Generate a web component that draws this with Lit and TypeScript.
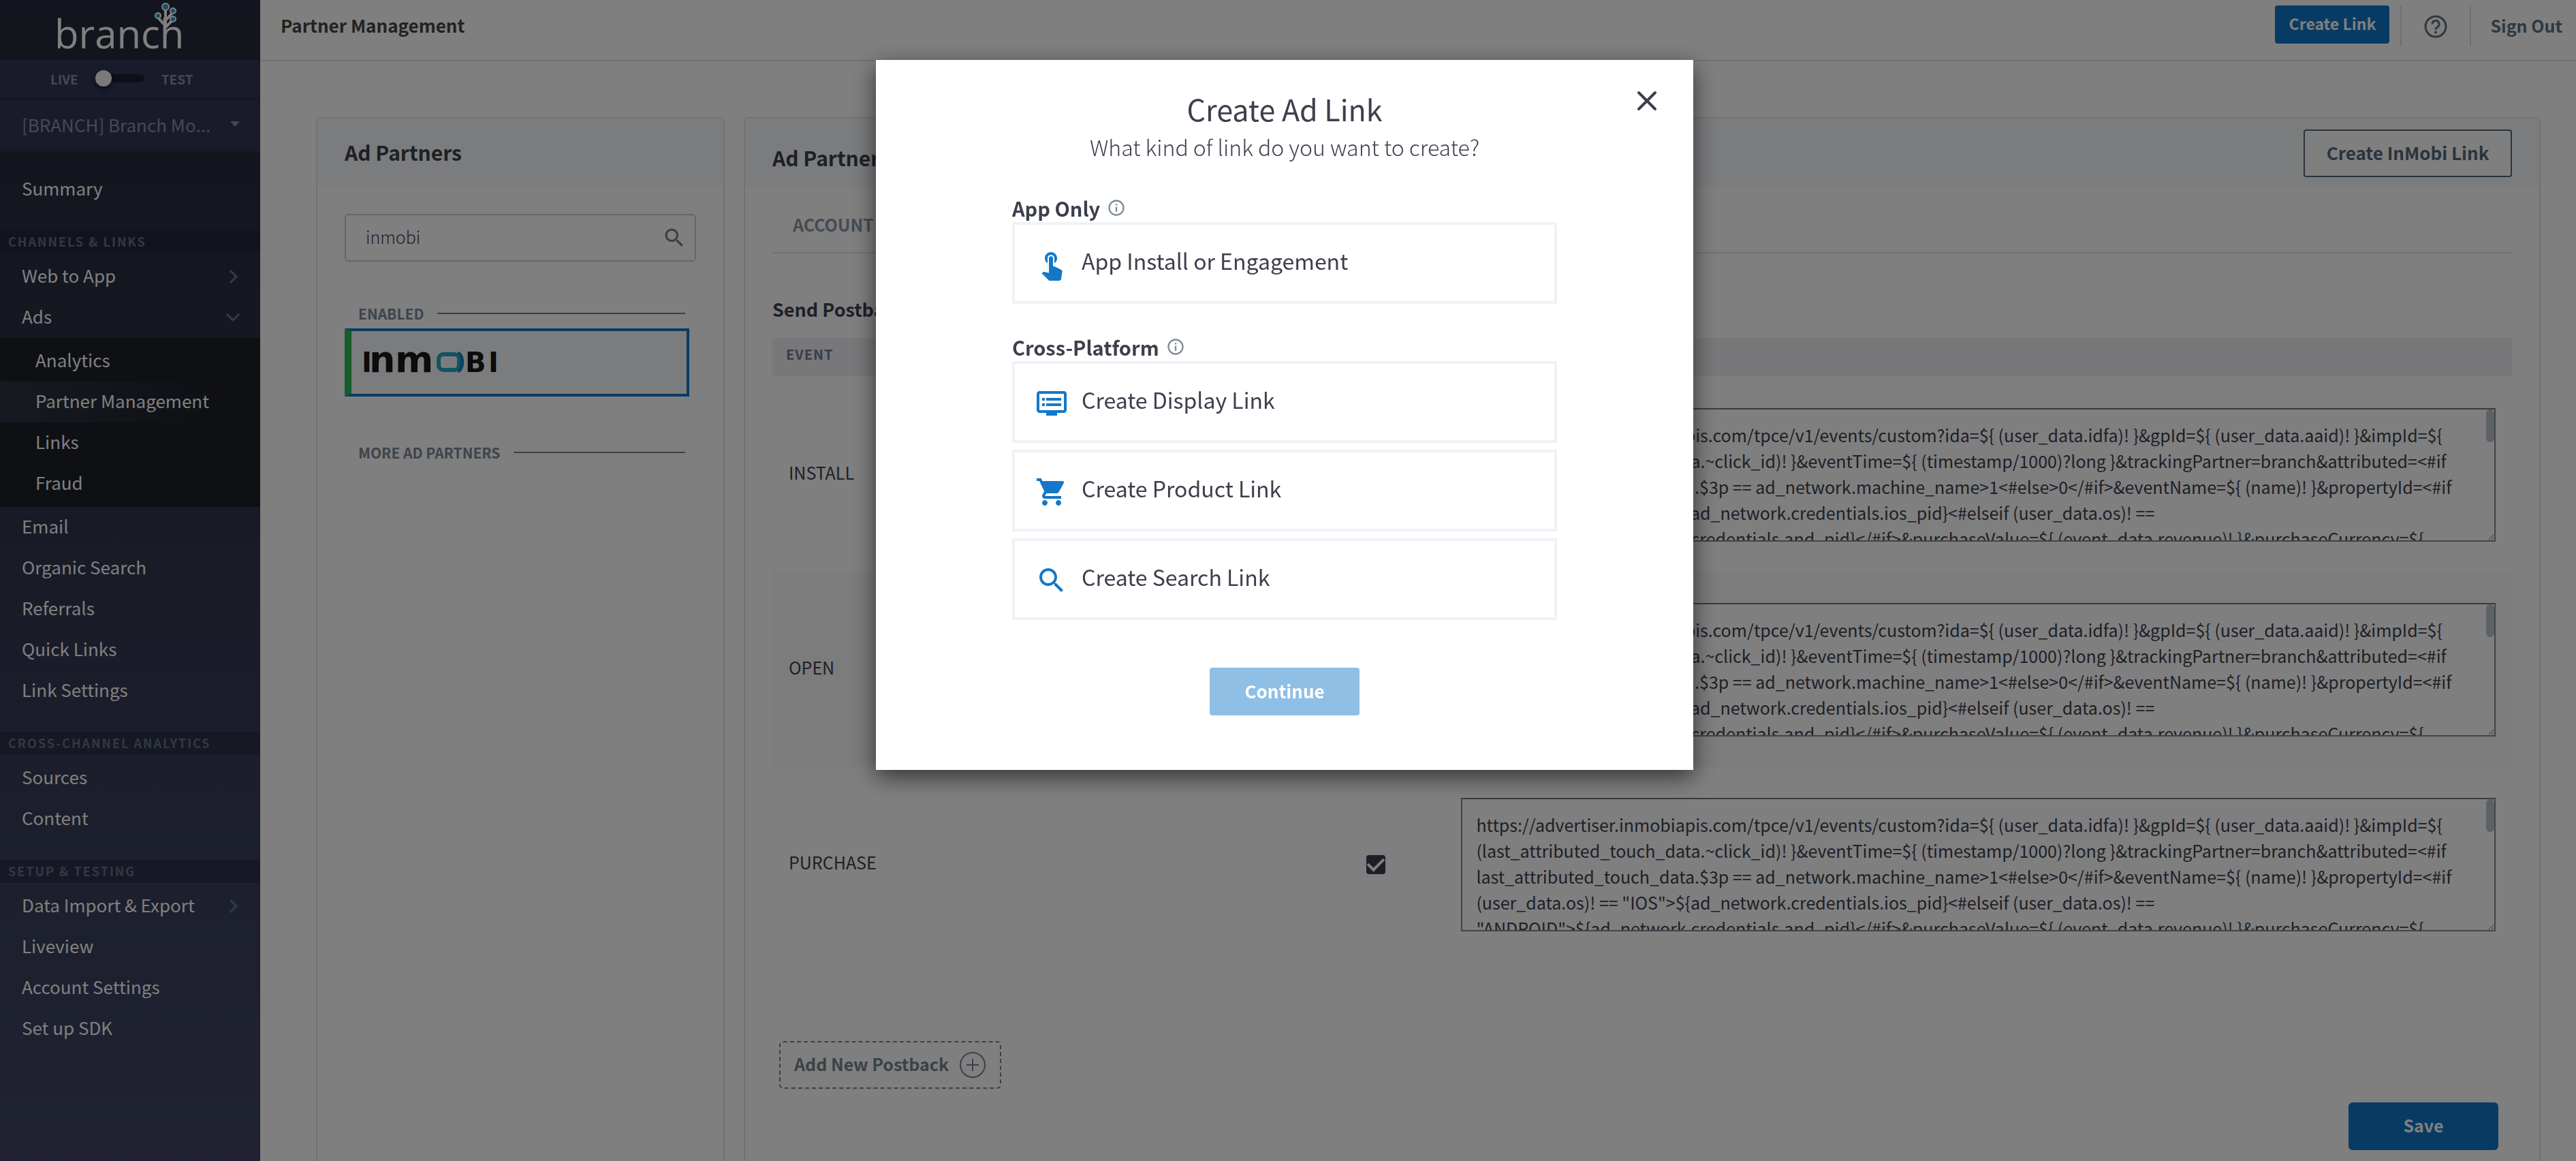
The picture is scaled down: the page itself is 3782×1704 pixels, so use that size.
import { LitElement, html, css, svg, nothing } from "lit";
import { customElement, property } from "lit/decorators.js";

const ICONS: Record<string, string> = {
  touch:
    "M9 11.24V7.5C9 6.12 10.12 5 11.5 5S14 6.12 14 7.5v3.74c1.21-.81 2-2.18 2-3.74C16 5.01 13.99 3 11.5 3S7 5.01 7 7.5c0 1.56.79 2.93 2 3.74zm9.84 4.63l-4.54-2.26c-.17-.07-.35-.11-.54-.11H13v-6c0-.83-.67-1.5-1.5-1.5S10 6.67 10 7.5v10.74l-3.43-.72c-.08-.01-.15-.03-.24-.03-.31 0-.59.13-.79.33l-.79.8 4.94 4.94c.27.27.65.44 1.06.44h6.79c.75 0 1.33-.55 1.44-1.28l.75-5.27c.01-.07.02-.14.02-.2 0-.62-.38-1.16-.91-1.38z",
  display:
    "M21 3H3c-1.1 0-2 .9-2 2v12c0 1.1.9 2 2 2h5v2h8v-2h5c1.1 0 1.99-.9 1.99-2L23 5c0-1.1-.9-2-2-2zm0 14H3V5h18v12zm-2-9H8v2h11V8zm0 4H8v2h11v-2zM7 8H5v2h2V8zm0 4H5v2h2v-2z",
  cart:
    "M7 18c-1.1 0-1.99.9-1.99 2S5.9 22 7 22s2-.9 2-2-.9-2-2-2zM1 2v2h2l3.6 7.59-1.35 2.45c-.16.28-.25.61-.25.96 0 1.1.9 2 2 2h12v-2H7.42c-.14 0-.25-.11-.25-.25l.03-.12.9-1.63h7.45c.75 0 1.41-.41 1.75-1.03l3.58-6.49c.08-.14.12-.31.12-.48 0-.55-.45-1-1-1H5.21l-.94-2H1zm16 16c-1.1 0-1.99.9-1.99 2s.89 2 1.99 2 2-.9 2-2-.9-2-2-2z",
  search:
    "M15.5 14h-.79l-.28-.27C15.41 12.59 16 11.11 16 9.5 16 5.91 13.09 3 9.5 3S3 5.91 3 9.5 5.91 16 9.5 16c1.61 0 3.09-.59 4.23-1.57l.27.28v.79l5 4.99L20.49 19l-4.99-5zm-6 0C7.01 14 5 11.99 5 9.5S7.01 5 9.5 5 14 7.01 14 9.5 11.99 14 9.5 14z",
  info:
    "M11 17h2v-6h-2v6zm1-15C6.48 2 2 6.48 2 12s4.48 10 10 10 10-4.48 10-10S17.52 2 12 2zm0 18c-4.41 0-8-3.59-8-8s3.59-8 8-8 8 3.59 8 8-3.59 8-8 8zM11 9h2V7h-2v2z",
};

const icon = (name: string, cls: string) =>
  html`<svg class=${cls} viewBox="0 0 24 24" aria-hidden="true">${svg`<path d=${ICONS[name]} fill="currentColor"></path>`}</svg>`;

const base = css`
  * { box-sizing: border-box; }
  button, input, select, textarea { font: inherit; color: inherit; margin: 0; }
  button { cursor: pointer; white-space: nowrap; padding: 0 0 4px; }
  a { color: inherit; text-decoration: none; }
`;

interface NavItem { label: string; arrow?: "right" | "down"; children?: string[]; }
interface NavGroup { title?: string; items: NavItem[]; }

const NAV: NavGroup[] = [
  { items: [{ label: "Summary" }] },
  {
    title: "CHANNELS & LINKS",
    items: [
      { label: "Web to App", arrow: "right" },
      { label: "Ads", arrow: "down", children: ["Analytics", "Partner Management", "Links", "Fraud"] },
      { label: "Email" },
      { label: "Organic Search" },
      { label: "Referrals" },
      { label: "Quick Links" },
      { label: "Link Settings" },
    ],
  },
  { title: "CROSS-CHANNEL ANALYTICS", items: [{ label: "Sources" }, { label: "Content" }] },
  {
    title: "SETUP & TESTING",
    items: [
      { label: "Data Import & Export", arrow: "right" },
      { label: "Liveview" },
      { label: "Account Settings" },
      { label: "Set up SDK" },
    ],
  },
];

@customElement("side-nav")
export class SideNav extends LitElement {
  static styles = [
    base,
    css`
      :host {
        display: block;
        background: linear-gradient(#26293a, #2c2f44 30%, #363b54 60%, #404564);
        color: #fff;
        font-size: 26px;
        font-weight: 400;
        overflow: hidden;
      }
      .logo { display: flex; justify-content: center; height: 88px; padding-right: 30px; }
      .logo svg { overflow: visible; }
      .mode {
        display: flex; align-items: center; gap: 25px; height: 58px; padding: 0 0 2px 74px;
        background: #323757; border-bottom: 2px solid #26293c;
        color: #8492a6; font-size: 19px; font-weight: 700;
      }
      .switch {
        appearance: none; width: 72px; height: 24px; border-radius: 12px; background: transparent;
        display: flex; align-items: center; position: relative;
      }
      .switch::before { content: ""; width: 66px; height: 12px; margin-left: 6px; border-radius: 6px; background: #1c1e30; }
      .switch::after {
        content: ""; position: absolute; left: 0; top: 0; width: 24px; height: 24px; border-radius: 50%;
        background: #f4f4f4; box-shadow: 0 4px 8px rgba(0, 0, 0, 0.5);
      }
      .app { display: flex; align-items: center; height: 76px; padding: 0 30px 4px 0; background: #323757; color: #8494aa; }
      .app select { appearance: none; flex: 1; min-width: 0; height: 72px; padding: 0 0 0 32px; border: 0; background: transparent; }
      .caret { width: 14px; height: 8px; color: #8492a6; }
      ul { list-style: none; margin: 0; padding: 0; }
      .group { padding: 4px 0 30px; }
      .group.first { padding-top: 26px; }
      .title {
        margin: 0; height: 34px; line-height: 32px; padding-left: 12px; background: rgba(30, 30, 50, 0.4);
        color: #627284; font-size: 18px; font-weight: 700; letter-spacing: 2px;
      }
      .link { display: flex; align-items: center; justify-content: space-between; height: 60px; padding: 0 30px 6px 32px; }
      .arrow { width: 20px; height: 20px; margin-top: 6px; fill: none; stroke: #66788a; stroke-width: 3; }
      .sub { padding: 4px 0; background: #1c2129; }
      .sub .link { padding-left: 52px; }
      .sub .active { background: linear-gradient(90deg, #2d3443, #1c2129 80%); }
    `,
  ];

  private arrow(dir?: string) {
    if (!dir) return nothing;
    return html`<svg class="arrow" viewBox="0 0 20 20" aria-hidden="true">
      ${dir === "right" ? svg`<path d="M6 1l9 9-9 9"></path>` : svg`<path d="M1 5l9 9 9-9"></path>`}
    </svg>`;
  }

  render() {
    return html`
      <div class="logo">
        <svg width="196" height="88" viewBox="0 0 196 88" role="img" aria-label="branch">
          <text x="2" y="71" font-family="Open Sans, Noto Sans, sans-serif" font-weight="400" font-size="58" fill="#fff">branch</text>
          <g stroke="#fff" stroke-width="4" fill="none">
            <path d="M165 36V14M165 38l-11-12M165 30l11-12M165 40l10-10"></path>
          </g>
          <g stroke="#fff" stroke-width="2" fill="#2a9fd8">
            <circle cx="165" cy="10" r="5"></circle><circle cx="176" cy="16" r="4"></circle>
            <circle cx="154" cy="23" r="4"></circle><circle cx="176" cy="28" r="4"></circle>
          </g>
        </svg>
      </div>
      <div class="mode">
        <span>LIVE</span>
        <input class="switch" type="checkbox" role="switch" aria-label="Test mode" />
        <span>TEST</span>
      </div>
      <div class="app">
        <select aria-label="App"><option>[BRANCH] Branch Mo...</option></select>
        <svg class="caret" viewBox="0 0 14 8" aria-hidden="true"><path d="M0 0h14L7 8z" fill="currentColor"></path></svg>
      </div>
      <nav>
        ${NAV.map(
          (g) => html`
            ${g.title ? html`<h2 class="title">${g.title}</h2>` : nothing}
            <ul class="group ${g.title ? "" : "first"}">
              ${g.items.map(
                (i) => html`<li>
                  <a class="link" href="#">${i.label}${this.arrow(i.arrow)}</a>
                  ${i.children
                    ? html`<ul class="sub">
                        ${i.children.map(
                          (c) => html`<li><a class="link ${c === "Partner Management" ? "active" : ""}" href="#">${c}</a></li>`
                        )}
                      </ul>`
                    : nothing}
                </li>`
              )}
            </ul>
          `
        )}
      </nav>
    `;
  }
}

@customElement("top-bar")
export class TopBar extends LitElement {
  static styles = [
    base,
    css`
      :host {
        display: flex; justify-content: space-between; height: 90px; padding: 8px 20px 20px 30px;
        background: #fff; border-bottom: 2px solid #dfe7ef;
      }
      .title { margin: 0; line-height: 58px; font-size: 26px; font-weight: 600; color: #44443f; }
      .actions { display: flex; align-items: flex-start; color: #5f7183; }
      .create {
        height: 56px; width: 168px; margin-right: 16px; border: 0; border-radius: 4px; background: #1076c8; color: #fff;
        font-size: 23px; font-weight: 700;
      }
      .help { display: flex; align-items: center; justify-content: center; width: 104px; height: 60px; padding: 2px 0 0; border: solid #dcdfe3; border-width: 0 2px; background: none; }
      .out { padding-left: 28px; line-height: 58px; font-size: 25px; font-weight: 700; }
    `,
  ];
  render() {
    return html`
      <h1 class="title">Partner Management</h1>
      <div class="actions">
        <button class="create">Create Link</button>
        <button class="help" aria-label="Help">
          <svg width="34" height="34" viewBox="0 0 34 34" aria-hidden="true">
            <circle cx="17" cy="17" r="15" fill="none" stroke="currentColor" stroke-width="3"></circle>
            <path d="M12 13.500a5 5 0 1 1 7.500 4.200c-1.800 1.100-2.500 1.800-2.500 3.800" fill="none" stroke="currentColor" stroke-width="3"></path>
            <circle cx="17" cy="25.500" r="2" fill="currentColor"></circle>
          </svg>
        </button>
        <a class="out" href="#">Sign Out</a>
      </div>
    `;
  }
}

@customElement("partner-list")
export class PartnerList extends LitElement {
  static styles = [
    base,
    css`
      :host { display: block; border: 2px solid #dfe4ea; border-bottom: 0; border-radius: 6px 6px 0 0; overflow: hidden; }
      .head { display: flex; align-items: center; height: 100px; padding: 0 40px 2px; background: #f6f8fb; }
      .head h2 { margin: 0; font-size: 30px; font-weight: 700; color: #3c404d; }
      .body { padding: 40px; }
      .search { display: flex; align-items: center; height: 70px; padding: 0 12px 0 29px; border: 2px solid #ccc; border-radius: 6px; color: #727f8c; }
      .search input { flex: 1; min-width: 0; border: 0; padding: 0 0 4px; background: none; outline: 0; color: #444; font-size: 25px; font-weight: 300; }
      .glass { width: 36px; height: 36px; }
      .label {
        display: flex; align-items: center; gap: 20px; margin: 62px 16px 8px 20px; line-height: 28px;
        font-size: 21px; font-weight: 700; color: #7b8896; white-space: nowrap;
      }
      .label::after { content: ""; flex: 1; height: 2px; background: #76838f; }
      .partner {
        display: flex; align-items: center; width: calc(100% - 10px); height: 100px; padding: 0 18px;
        border: 4px solid #1076c8; border-left: 10px solid #2cb85a; background: #f6f8fb;
      }
      .partner svg { overflow: visible; }
      .label.more { margin-top: 68px; }
    `,
  ];
  render() {
    return html`
      <div class="head"><h2>Ad Partners</h2></div>
      <div class="body">
        <div class="search">
          <input type="text" aria-label="Search ad partners" .value=${"inmobi"} />
          ${icon("search", "glass")}
        </div>
        <div class="label">ENABLED</div>
        <button class="partner" aria-label="INMOBI">
          <svg width="206" height="72" viewBox="0 -16 206 72" aria-hidden="true" font-family="DejaVu Sans, sans-serif" font-weight="700" fill="#1c1618">
            <text x="-3" y="34" font-size="40">I</text>
            <text x="8" y="34" font-size="54">n</text>
            <text x="46" y="34" font-size="54">m</text>
            <rect x="110" y="8" width="30" height="23" rx="7" fill="none" stroke="#22a9c4" stroke-width="6"></rect>
            <path d="M138 6c9 3 9 24 0 27" fill="none" stroke="#1787b8" stroke-width="5"></path>
            <text x="149" y="34" font-size="40">B</text>
            <text x="183" y="34" font-size="40">I</text>
          </svg>
        </button>
        <div class="label more">MORE AD PARTNERS</div>
      </div>
    `;
  }
}

const POSTBACK =
  'https://advertiser.inmobiapis.com/tpce/v1/events/custom?ida=${ (user_data.idfa)! }&gpId=${ (user_data.aaid)! }&impId=${ (last_attributed_touch_data.~click_id)! }&eventTime=${ (timestamp/1000)?long }&trackingPartner=branch&attributed=<#if last_attributed_touch_data.$3p == ad_network.machine_name>1<#else>0</#if>&eventName=${ (name)! }&propertyId=<#if (user_data.os)! == "IOS">${ad_network.credentials.ios_pid}<#elseif (user_data.os)! == "ANDROID">${ad_network.credentials.and_pid}</#if>&purchaseValue=${ (event_data.revenue)! }&purchaseCurrency=${';

@customElement("postback-panel")
export class PostbackPanel extends LitElement {
  @property({ type: Array }) events = ["INSTALL", "OPEN", "PURCHASE"];

  static styles = [
    base,
    css`
      :host { display: block; border: 2px solid #dfe4ea; border-bottom: 0; border-radius: 6px 6px 0 0; overflow: hidden; color: #3c404d; }
      .head { display: flex; align-items: center; justify-content: space-between; height: 100px; padding: 0 40px; background: #f6f8fb; }
      .head h2 { margin: 14px 0 0; font-size: 30px; font-weight: 700; }
      .create {
        align-self: flex-start; margin-top: 16px; width: 306px; height: 70px; border: 2px solid #56687a; border-radius: 4px; background: #fff;
        color: #56687a; font-size: 26px; font-weight: 600;
      }
      .body { display: flex; flex-direction: column; padding: 0 40px; }
      .tabs { height: 98px; padding: 32px 30px 0; border-bottom: 2px solid #dfe7ef; }
      .tab { padding: 0; border: 0; background: none; line-height: 46px; font-size: 25px; font-weight: 600; color: #8a96a8; }
      .subtitle { margin: 62px 0 22px; line-height: 40px; font-size: 27px; font-weight: 600; }
      table { width: 100%; border-collapse: separate; border-spacing: 0; table-layout: fixed; }
      .c-check { width: 250px; }
      .c-url { width: 60.4%; }
      thead th, thead td {
        height: 58px; padding: 0 20px 10px; border-bottom: 2px solid #fff; background: #f0f0f4; background-clip: padding-box;
        text-align: left; font-size: 20px; font-weight: 700; letter-spacing: 1px; color: #74799a;
      }
      tbody tr:nth-child(even) { background: #f8f8fa; }
      tbody td, tbody th { height: 286px; padding: 0; vertical-align: middle; }
      tbody th { padding: 0 0 8px 24px; text-align: left; font-size: 25px; font-weight: 400; }
      .check { text-align: center; }
      .check input {
        appearance: none; display: inline-grid; place-items: center; width: 28px; height: 28px; vertical-align: middle;
        border-radius: 4px; background: #3c3f4c;
      }
      .check input::before { content: ""; width: 20px; height: 10px; margin-bottom: 6px; border: solid #fff; border-width: 0 0 4px 4px; rotate: -45deg; }
      tbody .url { padding: 0 24px 0 0; }
      .field { position: relative; }
      .thumb { position: absolute; top: 2px; right: 2px; width: 12px; height: 48px; border-radius: 6px; background: #b9c2ca; }
      textarea {
        display: block; width: 100%; height: 196px; padding: 18px 18px 0 20px; border: 2px solid #888; border-top-color: #767676; background: #fff;
        font-size: 25px; font-weight: 400; line-height: 38px; resize: both; outline: 0; scrollbar-width: none;
      }
      .add {
        display: flex; align-items: center; justify-content: space-between; align-self: flex-start; width: 326px; height: 70px;
        margin: 116px 0 0 10px; padding: 0 20px; border: 2px dashed #76838f; border-radius: 6px; background: none;
        font-size: 25px; font-weight: 600; color: #76838f;
      }
      .add span { padding-bottom: 4px; }
      .save {
        align-self: flex-end; width: 220px; height: 70px; margin: 20px 20px 0 0; border: 0; border-radius: 6px; background: #1076c8;
        color: #fff; font-size: 25px; font-weight: 700;
      }
    `,
  ];
  render() {
    return html`
      <div class="head">
        <h2>Ad Partners</h2>
        <button class="create">Create InMobi Link</button>
      </div>
      <div class="body">
        <div class="tabs"><button class="tab">ACCOUNT</button></div>
        <h3 class="subtitle">Send Postbacks</h3>
        <table>
          <colgroup><col /><col class="c-check" /><col class="c-url" /></colgroup>
          <thead><tr><th scope="col">EVENT</th><td></td><td></td></tr></thead>
          <tbody>
            ${this.events.map(
              (e) => html`<tr>
                <th scope="row">${e}</th>
                <td class="check"><input type="checkbox" checked aria-label="Enable ${e}" /></td>
                <td class="url">
                  <div class="field">
                    <textarea spellcheck="false" aria-label="${e} postback URL" .value=${POSTBACK}></textarea>
                    <div class="thumb"></div>
                  </div>
                </td>
              </tr>`
            )}
          </tbody>
        </table>
        <button class="add">
          <span>Add New Postback</span>
          <svg width="40" height="40" viewBox="0 0 40 40" fill="none" stroke="currentColor" stroke-width="2" aria-hidden="true">
            <circle cx="20" cy="20" r="18"></circle><path d="M20 11v18M11 20h18"></path>
          </svg>
        </button>
        <button class="save">Save</button>
      </div>
    `;
  }
}

const CHOICES = [
  { title: "App Only", options: [{ icon: "touch", label: "App Install or Engagement" }] },
  {
    title: "Cross-Platform",
    options: [
      { icon: "display", label: "Create Display Link" },
      { icon: "cart", label: "Create Product Link" },
      { icon: "search", label: "Create Search Link" },
    ],
  },
];

@customElement("create-link-dialog")
export class CreateLinkDialog extends LitElement {
  static styles = [
    base,
    css`
      :host {
        position: fixed; inset: 0; display: flex; justify-content: center; align-items: flex-start;
        padding: 88px 10px 0 0; background: rgba(0, 0, 0, 0.5); color: #3c3f4c;
      }
      .dialog {
        position: relative; display: flex; flex-direction: column; align-items: center; width: 1200px;
        padding: 42px 0 80px; background: #fff; box-shadow: 0 10px 32px rgba(0, 0, 0, 0.6);
      }
      h2 { margin: 0; line-height: 58px; font-size: 43px; font-weight: 400; }
      .lead { margin: 0; line-height: 54px; font-size: 32px; font-weight: 300; }
      .close { position: absolute; right: 48px; top: 40px; display: flex; padding: 4px; border: 0; background: none; }
      .group { width: 800px; padding-top: 44px; }
      h3 { display: flex; align-items: center; gap: 10px; margin: 0; padding-bottom: 2px; line-height: 38px; font-size: 29px; font-weight: 700; }
      .info { width: 28px; height: 28px; color: #7b8a9a; }
      .list { display: flex; flex-direction: column; gap: 10px; }
      .option {
        display: flex; align-items: center; gap: 20px; height: 120px; padding: 0 30px; border: 4px solid #f1f2f7;
        background: #fff; font-size: 32px; font-weight: 400; line-height: 48px;
      }
      .option span { padding-bottom: 8px; }
      .glyph { width: 48px; height: 48px; margin-top: 4px; color: #1478c9; }
      .go {
        width: 220px; height: 70px; margin-top: 70px; border: 0; border-radius: 4px; background: #90bfe5; color: #fff;
        font-size: 26px; font-weight: 700;
      }
    `,
  ];
  render() {
    return html`
      <div class="dialog" role="dialog" aria-modal="true" aria-labelledby="dialog-title">
        <button class="close" aria-label="Close">
          <svg width="32" height="32" viewBox="0 0 32 32" fill="none" stroke="#3c3f4c" stroke-width="4" stroke-linecap="round" aria-hidden="true">
            <path d="M4 4l24 24M28 4L4 28"></path>
          </svg>
        </button>
        <h2 id="dialog-title">Create Ad Link</h2>
        <p class="lead">What kind of link do you want to create?</p>
        ${CHOICES.map(
          (c) => html`<section class="group">
            <h3>${c.title}${icon("info", "info")}</h3>
            <div class="list">
              ${c.options.map((o) => html`<button class="option">${icon(o.icon, "glyph")}<span>${o.label}</span></button>`)}
            </div>
          </section>`
        )}
        <button class="go">Continue</button>
      </div>
    `;
  }
}

@customElement("app-root")
export class AppRoot extends LitElement {
  static styles = [
    base,
    css`
      :host {
        display: grid; grid-template-columns: 382px minmax(0, 1fr); height: 100vh; overflow: hidden; background: #fff;
        font-family: "Noto Sans CJK SC", "Noto Sans", sans-serif;
      }
      .page { display: flex; flex-direction: column; min-width: 0; min-height: 0; }
      .cards { display: grid; grid-template-columns: 600px minmax(0, 1fr); gap: 28px; flex: 1; min-height: 0; padding: 82px 52px 0 82px; }
    `,
  ];
  render() {
    return html`
      <side-nav></side-nav>
      <main class="page">
        <top-bar></top-bar>
        <div class="cards">
          <partner-list></partner-list>
          <postback-panel></postback-panel>
        </div>
      </main>
      <create-link-dialog></create-link-dialog>
    `;
  }
}
